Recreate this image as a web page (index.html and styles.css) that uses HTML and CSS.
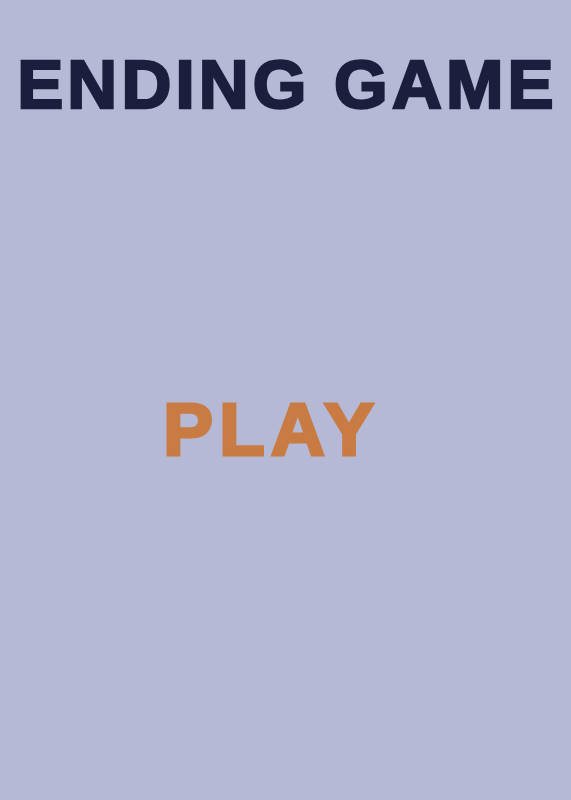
FILE: index.html
```html
<!DOCTYPE html>
<html>
<head>
<meta charset="utf-8">
<link rel="stylesheet" href="styles.css">
</head>
<body>
<main class="screen">
  <h1 class="title">ENDING GAME</h1>
  <button class="play">PLAY</button>
</main>
</body>
</html>
```
FILE: styles.css
```css
html, body {
  margin: 0;
  padding: 0;
  height: 100%;
  background: #b5b9d6;
}
.screen {
  display: flex;
  flex-direction: column;
  align-items: center;
  height: 800px;
  font-family: "Liberation Sans", Arial, sans-serif;
}
.title {
  margin: 0 0 0 4px;
  padding-top: 45px;
  font-size: 69px;
  line-height: 80px;
  font-weight: 700;
  letter-spacing: 4.2px;
  color: #1b1e3c;
  -webkit-text-stroke: 2.5px #1b1e3c;
  white-space: nowrap;
}
.play {
  margin-top: 260px;
  margin-right: 28px;
  background: none;
  border: none;
  padding: 0;
  font-family: "Liberation Sans", Arial, sans-serif;
  font-size: 75px;
  line-height: 88px;
  font-weight: 700;
  letter-spacing: 6px;
  color: #c97b44;
  -webkit-text-stroke: 3px #c97b44;
  cursor: pointer;
}
```
